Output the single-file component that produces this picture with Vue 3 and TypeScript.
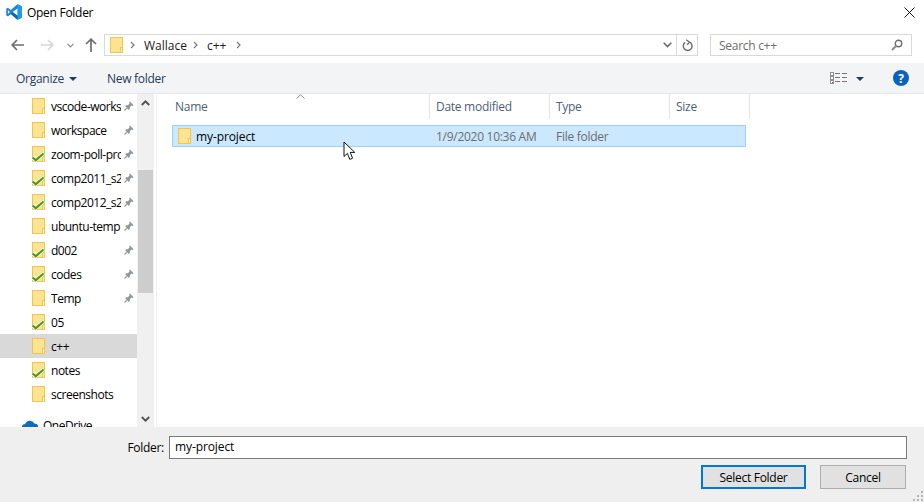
<script setup lang="ts">
interface Item { name: string; pin: boolean; synced: boolean; active?: boolean }
const items: Item[] = [
  { name: 'vscode-workspaces', pin: true, synced: false },
  { name: 'workspace', pin: true, synced: false },
  { name: 'zoom-poll-project', pin: true, synced: true },
  { name: 'comp2011_s2', pin: true, synced: true },
  { name: 'comp2012_s2', pin: true, synced: true },
  { name: 'ubuntu-temp', pin: true, synced: false },
  { name: 'd002', pin: true, synced: true },
  { name: 'codes', pin: true, synced: true },
  { name: 'Temp', pin: true, synced: false },
  { name: '05', pin: false, synced: true },
  { name: 'c++', pin: false, synced: false, active: true },
  { name: 'notes', pin: false, synced: true },
  { name: 'screenshots', pin: false, synced: false },
]
</script>

<template>
  <div class="dialog">
    <header class="titlebar">
      <svg class="logo" width="16" height="16" viewBox="0 0 16 16">
        <path d="M11.4 0.2 L15.8 2.3 V13.7 L11.4 15.8 L4.9 9.9 L1.9 12.2 L0.2 11.3 V4.7 L1.9 3.8 L4.9 6.1 Z" fill="#1f87d0" />
        <path d="M11.4 0.2 L15.8 2.3 V13.7 L11.4 15.8 Z" fill="#1a9bef" />
        <path d="M0.2 11.3 L1.9 12.2 L4.9 9.9 L11.4 15.8 L11.4 11.6 L6.8 8 L1.9 12 Z" fill="#0c66ad" />
        <path d="M11.4 4.5 L6.8 8 L11.4 11.5 Z M1.9 6 V10 L3.9 8 Z" fill="#fff" />
      </svg>
      <span class="title">Open Folder</span>
      <svg class="close" width="11" height="11" viewBox="0 0 11 11"><path d="M0.5 0.5 L10.5 10.5 M10.5 0.5 L0.5 10.5" stroke="#111" stroke-width="1" /></svg>
    </header>

    <div class="navrow">
      <svg class="nav-back" width="14" height="12" viewBox="0 0 14 12"><path d="M6 1 L1.2 6 L6 11 M1.5 6 H13" fill="none" stroke="#6d6d6d" stroke-width="1.7" /></svg>
      <svg class="nav-fwd" width="14" height="12" viewBox="0 0 14 12"><path d="M8 1 L12.8 6 L8 11 M12.5 6 H1" fill="none" stroke="#d6d6d6" stroke-width="1.7" /></svg>
      <svg class="nav-drop" width="7" height="5" viewBox="0 0 7 5"><path d="M0.5 0.8 L3.5 3.8 L6.5 0.8" fill="none" stroke="#8a8a8a" stroke-width="1.2" /></svg>
      <svg class="nav-up" width="12" height="14" viewBox="0 0 12 14"><path d="M1 6 L6 1.2 L11 6 M6 1.5 V14" fill="none" stroke="#6d6d6d" stroke-width="1.7" /></svg>
      <div class="address">
        <span class="folder addr-folder"><span class="tab"></span></span>
        <svg class="crumb c1" width="5" height="8" viewBox="0 0 5 8"><path d="M1 1 L4 4 L1 7" fill="none" stroke="#7a7a7a" stroke-width="1.2" /></svg>
        <span class="crumb-text">Wallace</span>
        <svg class="crumb" width="5" height="8" viewBox="0 0 5 8"><path d="M1 1 L4 4 L1 7" fill="none" stroke="#7a7a7a" stroke-width="1.2" /></svg>
        <span class="crumb-text">c++</span>
        <svg class="crumb c3" width="5" height="8" viewBox="0 0 5 8"><path d="M1 1 L4 4 L1 7" fill="none" stroke="#7a7a7a" stroke-width="1.2" /></svg>
        <span class="grow"></span>
        <svg class="addr-chev" width="9" height="6" viewBox="0 0 9 6"><path d="M0.7 0.8 L4.5 4.6 L8.3 0.8" fill="none" stroke="#666" stroke-width="1.5" /></svg>
        <span class="addr-refresh">
          <svg width="11" height="13" viewBox="0 0 11 13"><path d="M3.2 3.4 A4.4 4.4 0 1 0 7.6 3.1 M4.2 0.8 L7.4 3.1 L5.2 5.8" fill="none" stroke="#6d6d6d" stroke-width="1.4" /></svg>
        </span>
      </div>
      <div class="search">
        <span class="search-text">Search c++</span>
        <svg width="12" height="12" viewBox="0 0 12 12"><circle cx="7.5" cy="4.5" r="3.2" fill="none" stroke="#6d6d6d" stroke-width="1.4" /><path d="M5 7 L1 11" stroke="#8a8a8a" stroke-width="1.9" /></svg>
      </div>
    </div>

    <div class="toolbar">
      <span class="tool organize">Organize</span>
      <span class="caret"></span>
      <span class="tool newfolder">New folder</span>
      <span class="grow"></span>
      <svg class="views" width="17" height="13" viewBox="0 0 17 13">
        <rect x="0.5" y="0.5" width="3" height="3" fill="#fff" stroke="#8f8f8f" />
        <rect x="0.5" y="4.5" width="3" height="3" fill="#fff" stroke="#8f8f8f" />
        <rect x="0.5" y="8.5" width="3" height="3" fill="#fff" stroke="#8f8f8f" />
        <rect x="2" y="10" width="1" height="1" fill="#c33" />
        <path d="M5 1.5 H10 M12 1.5 H17 M5 5.5 H10 M12 5.5 H17 M5 9.5 H10 M12 9.5 H17" stroke="#777" stroke-width="1" />
      </svg>
      <span class="caret views-caret"></span>
      <span class="help">?</span>
    </div>

    <main class="body">
      <aside class="tree">
        <div v-for="item in items" :key="item.name" class="tree-row" :class="{ active: item.active }">
          <span class="folder">
            <span class="tab"></span>
            <svg v-if="item.synced" class="check" width="14" height="10" viewBox="0 0 14 10"><path d="M1.5 5.5 L4.8 8.2 L12.5 1.5" fill="none" stroke="#fff" stroke-width="3.6" /><path d="M1.5 5.5 L4.8 8.2 L12.5 1.5" fill="none" stroke="#4f9a1e" stroke-width="2.2" /></svg>
          </span>
          <span class="tree-name">{{ item.name }}</span>
          <svg v-if="item.pin" class="pin" width="10" height="10" viewBox="0 0 10 10"><path d="M5.8 0.4 L9.6 4.2 L8.6 5 L7.5 4.5 L5.8 6.2 L5.8 8 L4.8 8.9 L1.2 5.3 L2.1 4.3 L3.9 4.3 L5.6 2.6 L5.1 1.5 Z" fill="#8f959b" /><path d="M2.8 7.2 L0.5 9.5" stroke="#8f959b" stroke-width="1.2" /></svg>
        </div>
        <div class="tree-gap"></div>
        <div class="tree-row onedrive">
          <svg width="16" height="12" viewBox="0 0 16 12"><path d="M3.5 12 A3.5 3.5 0 0 1 3.2 5 A5 5 0 0 1 12.4 4.4 A3.8 3.8 0 0 1 12.5 12 Z" fill="#0f6cbd" /></svg>
          <span>OneDrive</span>
        </div>
      </aside>

      <div class="scrollbar">
        <svg width="9" height="6" viewBox="0 0 9 6"><path d="M0.8 5 L4.5 1.3 L8.2 5" fill="none" stroke="#505050" stroke-width="1.8" /></svg>
        <div class="track"><div class="thumb"></div></div>
        <svg width="9" height="6" viewBox="0 0 9 6"><path d="M0.8 1 L4.5 4.7 L8.2 1" fill="none" stroke="#505050" stroke-width="1.8" /></svg>
      </div>

      <section class="files">
        <svg class="sort" width="9" height="5" viewBox="0 0 9 5"><path d="M0.5 4.5 L4.5 0.8 L8.5 4.5" fill="none" stroke="#8a8a8a" stroke-width="1" /></svg>
        <div class="file-head">
          <span class="col col-name">Name</span>
          <span class="col col-date">Date modified</span>
          <span class="col col-type">Type</span>
          <span class="col col-size">Size</span>
        </div>
        <div class="file-row">
          <span class="cell col-name name-cell"><span class="folder small"><span class="tab"></span></span>my-project</span>
          <span class="cell col-date">1/9/2020 10:36 AM</span>
          <span class="cell col-type">File folder</span>
          <span class="cell col-size"></span>
        </div>
        <svg class="cursor" width="14" height="20" viewBox="0 0 14 20"><path d="M1 1 V15.5 L4.4 12.4 L6.8 18.4 L9.6 17.2 L7.2 11.4 L11.8 11.4 Z" fill="#fff" stroke="#111" stroke-width="1" stroke-linejoin="miter" /></svg>
      </section>
    </main>

    <footer class="footer">
      <div class="folder-line">
        <label class="folder-label">Folder:</label>
        <div class="input">my-project</div>
      </div>
      <div class="buttons">
        <button class="btn primary">Select Folder</button>
        <button class="btn">Cancel</button>
      </div>
      <svg class="grip" width="11" height="11" viewBox="0 0 11 11"><path d="M8 0h2v2H8zM4 4h2v2H4zM8 4h2v2H8zM0 8h2v2H0zM4 8h2v2H4zM8 8h2v2H8z" fill="#b5b5b5" /></svg>
    </footer>
  </div>
</template>

<style>
html, body { margin: 0; background: #fff; overflow: hidden; }
</style>

<style scoped>
.dialog {
  width: 924px; height: 502px; display: flex; flex-direction: column; background: #fff;
  font-family: "Open Sans", "Noto Sans", sans-serif; font-size: 12px; color: #000; overflow: hidden;
  letter-spacing: -0.28px;
}
.grow { flex: 1; }
.titlebar { height: 32px; flex: none; display: flex; align-items: center; padding: 0 9px 8px 6px; box-sizing: border-box; }
.logo { margin-right: 5px; }
.title { flex: 1; font-size: 12px; margin-top: 1px; }
.navrow { height: 31px; flex: none; display: flex; align-items: center; padding: 0 0 5px 11px; box-sizing: border-box; }
.nav-back { margin-right: 15px; }
.nav-fwd { margin-right: 13px; }
.nav-drop { margin-right: 11px; }
.nav-up { margin-right: 7px; }
.address {
  width: 594px; height: 22px; border: 1px solid #d9d9d9; box-sizing: border-box;
  display: flex; align-items: center; padding-left: 5px; margin-right: 12px;
}
.folder.addr-folder { margin-right: 0; }
.crumb { margin: 0 9px 0 6px; flex: none; }
.crumb.c1 { margin-left: 7px; }
.crumb.c3 { margin-left: 10px; }
.crumb-text { font-size: 12px; color: #1a1a1a; letter-spacing: 0; }
.addr-chev { margin-right: 4px; }
.addr-refresh { width: 20px; height: 20px; border-left: 1px solid #d9d9d9; display: flex; align-items: center; justify-content: center; }
.search {
  width: 202px; height: 22px; border: 1px solid #d9d9d9; box-sizing: border-box;
  display: flex; align-items: center; justify-content: space-between; padding: 0 8px; color: #6d6d6d;
}
.toolbar { height: 31px; flex: none; background: #f3f4f6; display: flex; align-items: center; padding: 0 15px 0 16px; box-sizing: border-box; color: #243a5e; border-bottom: 1px solid #e6e6e6; }
.caret { width: 0; height: 0; border: 4px solid transparent; border-top: 4px solid #243a5e; border-bottom: 0; margin: 1px 0 0 5px; }
.newfolder { margin-left: 30px; }
.views { margin-right: 9px; }
.views-caret { margin-left: 0; width: 0; }
.help {
  width: 16px; height: 16px; border-radius: 50%; background: #0a62bd; color: #fff; font-weight: 700; font-size: 12px;
  display: flex; align-items: center; justify-content: center; margin-left: 29px;
}
.body { height: 333px; flex: none; display: flex; }
.tree { width: 137px; flex: none; overflow: hidden; letter-spacing: -0.48px; }
.tree-row { height: 24px; display: flex; align-items: center; padding-left: 32px; position: relative; }
.tree-row.active { background: #d9d9d9; }
.folder { width: 11px; height: 14px; flex: none; background: #fde490; border: 1px solid #eec650; box-sizing: content-box; position: relative; margin-right: 6px; display: block; }
.tab { position: absolute; right: -1px; bottom: -1px; width: 1px; height: 4px; border: 1px solid #eec650; background: #fff2c0; box-sizing: content-box; }
.check { position: absolute; left: -2px; bottom: -1px; }
.tree-name { width: 70px; overflow: hidden; white-space: nowrap; flex: none; }
.pin { margin-left: 3px; }
.tree-gap { height: 7px; }
.onedrive { padding-left: 22px; gap: 5px; }
.scrollbar { width: 17px; flex: none; background: #f0f0f0; display: flex; flex-direction: column; align-items: center; padding: 6px 0 5px; box-sizing: border-box; margin-right: 2px; }
.track { flex: 1; width: 100%; padding-top: 64px; box-sizing: border-box; }
.thumb { height: 123px; background: #cdcdcd; margin: 0 1px; }
.files { flex: 1; border-left: 1px solid #f0f0f0; position: relative; padding-left: 15px; }
.sort { position: absolute; left: 139px; top: 0; }
.file-head { display: flex; height: 25px; color: #4c607a; }
.col { display: flex; align-items: center; height: 25px; border-right: 1px solid #e5e5e5; box-sizing: border-box; padding-left: 6px; }
.col-name { width: 258px; flex: none; padding-left: 3px; }
.col-date { width: 120px; flex: none; }
.col-type { width: 120px; flex: none; }
.col-size { width: 80px; flex: none; }
.file-row {
  display: flex; height: 22px; width: 574px; margin: 6px 0 0 0; background: #cce8ff; border: 1px solid #99d1ff; box-sizing: border-box;
  color: #6d6d6d; align-items: center;
}
.cell { padding-left: 6px; box-sizing: border-box; }
.file-row .col-name { width: 257px; }
.name-cell { color: #000; display: flex; align-items: center; padding-left: 5px; letter-spacing: -0.1px; }
.folder.small { margin-right: 5px; }
.cursor { position: absolute; left: 186px; top: 47px; }
.footer { flex: 1; background: #efefef; position: relative; padding: 9px 17px 0 0; box-sizing: border-box; }
.folder-line { display: flex; justify-content: flex-end; align-items: center; }
.folder-label { margin-right: 5px; }
.input { width: 738px; height: 23px; background: #fff; border: 1px solid #7a7a7a; box-sizing: border-box; padding-left: 5px; line-height: 20px; letter-spacing: -0.1px; }
.buttons { display: flex; justify-content: flex-end; gap: 14px; margin-top: 6px; padding-right: 1px; }
.btn {
  width: 86px; height: 24px; padding: 0; background: #e1e1e1; border: 1px solid #adadad; font: inherit; letter-spacing: inherit; color: #000; box-sizing: border-box;
}
.btn.primary { width: 105px; border: 2px solid #0078d7; }
.grip { position: absolute; right: 0; bottom: 0; }
</style>
